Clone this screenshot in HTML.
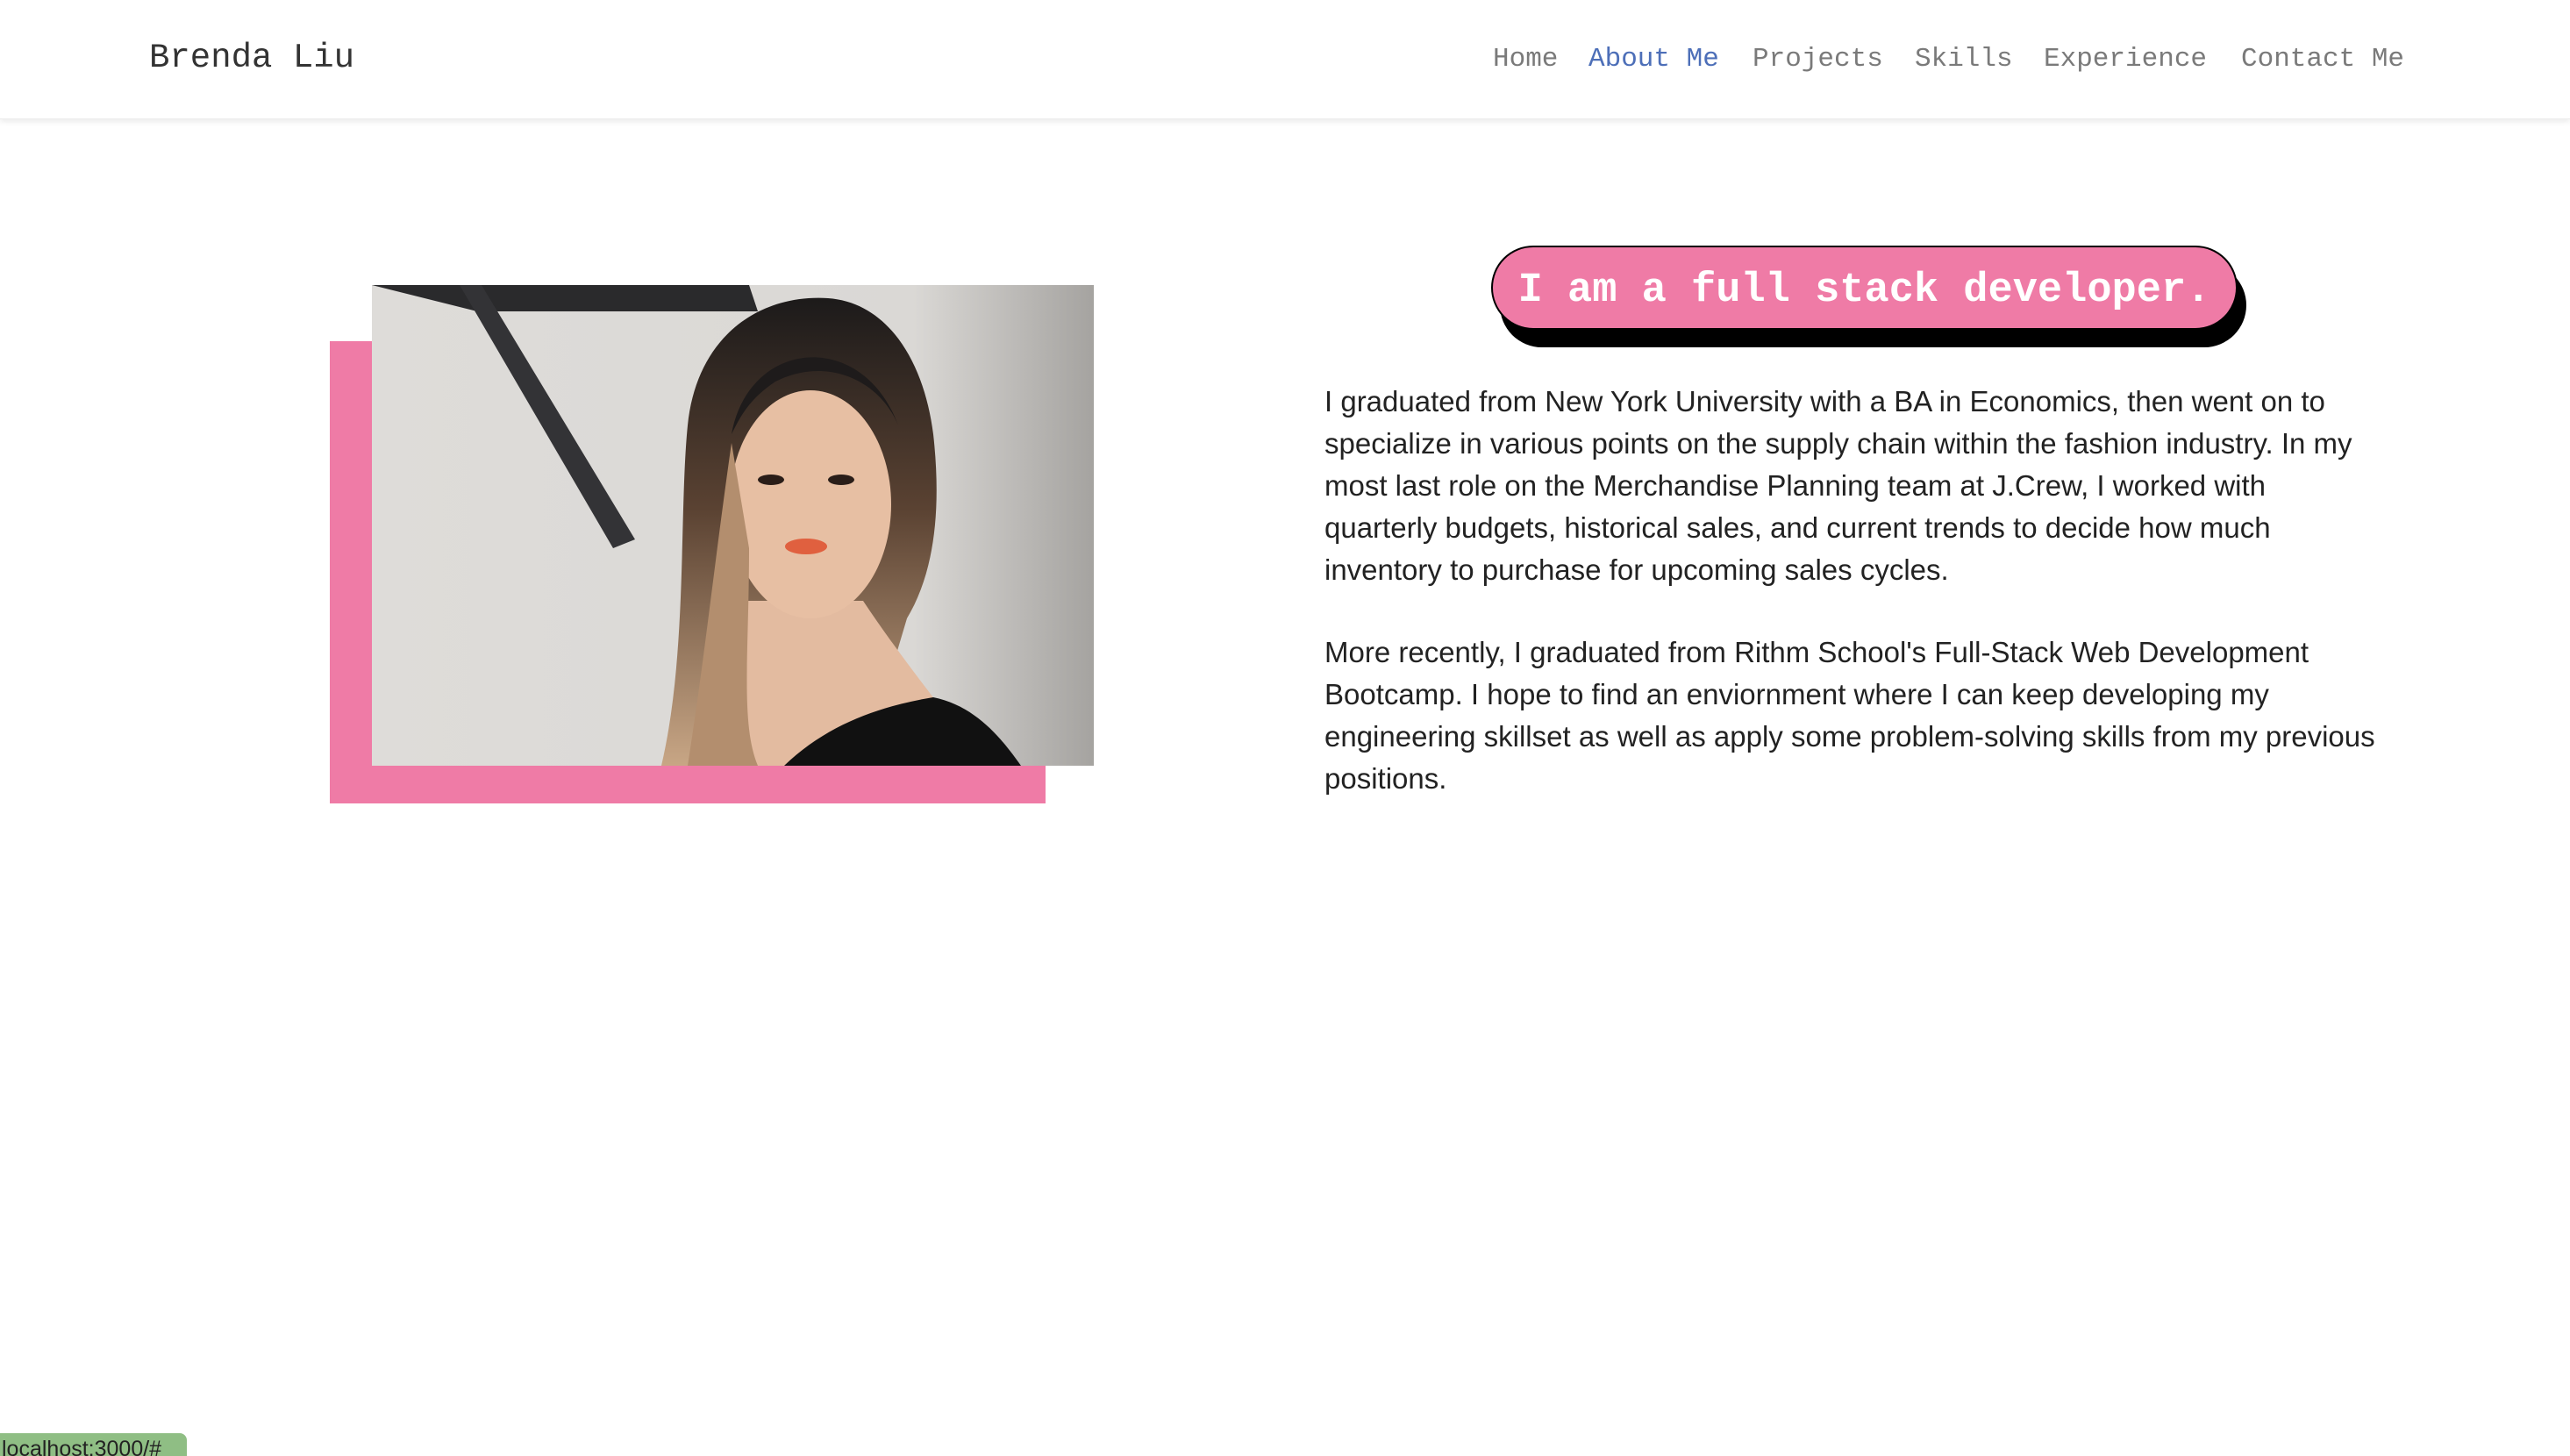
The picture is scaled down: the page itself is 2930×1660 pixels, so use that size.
<!DOCTYPE html>
<html><head><meta charset="utf-8">
<style>
html,body{margin:0;padding:0;width:2930px;height:1660px;background:#fff;overflow:hidden;position:relative}
.nav{position:absolute;left:0;top:0;width:2930px;height:135px;background:#fff;box-shadow:0 3px 6px rgba(0,0,0,0.08);border-bottom:1px solid #ececec}
.name{position:absolute;left:170px;top:42px;font:39px/48px "Liberation Mono",monospace;color:#333}
.nl{position:absolute;top:48px;font:31px/40px "Liberation Mono",monospace;color:#7a7a7a;white-space:nowrap}
.act{color:#4d6fb8}
.pink{position:absolute;left:376px;top:389px;width:816px;height:527px;background:#ef7ba6}
.photo{position:absolute;left:424px;top:325px;width:823px;height:548px;overflow:hidden}
.pill{position:absolute;left:1700px;top:280px;width:847px;height:92px;background:#ef7ba6;border:2px solid #000;border-radius:48px;box-shadow:10px 20px 0 #000;
font:bold 47px/92px "Liberation Mono",monospace;color:#fff;text-align:center;white-space:nowrap;box-sizing:content-box;padding-top:0}
.pill span{position:relative;top:4px}
.p{position:absolute;left:1510px;font:33px/48px "Liberation Sans",sans-serif;color:#222;white-space:nowrap}
.status{position:absolute;left:0;top:1634px;width:213px;height:30px;background:#8fbe84;border-top-right-radius:8px;font:25px/36px "Liberation Sans",sans-serif;color:#222;padding-left:2px;box-sizing:border-box;overflow:hidden}
</style></head><body>
<div class="nav">
<div class="name">Brenda Liu</div>
<div class="nl" style="left:1702px">Home</div>
<div class="nl act" style="left:1811px">About Me</div>
<div class="nl" style="left:1998px">Projects</div>
<div class="nl" style="left:2183px">Skills</div>
<div class="nl" style="left:2330px">Experience</div>
<div class="nl" style="left:2555px">Contact Me</div>
</div>

<div class="pink"></div>
<div class="photo">
<svg width="823" height="548" viewBox="0 0 823 548" xmlns="http://www.w3.org/2000/svg">
<defs>
<linearGradient id="hair" x1="0" y1="0" x2="0" y2="1"><stop offset="0" stop-color="#1c1a1a"/><stop offset="0.45" stop-color="#5a4232"/><stop offset="1" stop-color="#c8a685"/></linearGradient>
<linearGradient id="wall" x1="0" y1="0" x2="1" y2="0"><stop offset="0" stop-color="#dedcd9"/><stop offset="0.75" stop-color="#dad8d5"/><stop offset="1" stop-color="#a5a3a0"/></linearGradient>
</defs>
<rect width="823" height="548" fill="url(#wall)"/>
<polygon points="0,0 430,0 440,30 120,30" fill="#2a2a2c"/>
<polygon points="100,0 125,0 300,290 275,300" fill="#333336"/>
<path d="M330,548 C360,420 350,260 360,160 C370,60 440,10 520,15 C590,20 630,90 640,170 C650,260 640,330 610,380 L560,548 Z" fill="url(#hair)"/>
<path d="M395,548 C400,470 410,400 420,360 L560,360 C600,420 640,470 700,548 Z" fill="#e3bba0"/>
<path d="M470,548 C520,500 580,480 640,470 C690,480 720,520 740,548 Z" fill="#111"/>
<ellipse cx="500" cy="250" rx="92" ry="130" fill="#e7bfa3"/>
<path d="M410,170 C430,60 560,50 600,160 C580,110 520,80 460,110 C430,130 420,150 410,170 Z" fill="#1e1b1b"/>
<path d="M360,548 C380,420 390,320 410,180 L430,300 C430,420 420,500 440,548 Z" fill="#b38e6e"/>
<ellipse cx="455" cy="222" rx="15" ry="6" fill="#2a1d18"/>
<ellipse cx="535" cy="222" rx="15" ry="6" fill="#2a1d18"/>
<ellipse cx="495" cy="298" rx="24" ry="9" fill="#e0603f"/>
</svg>
</div>

<div class="pill"><span>I am a full stack developer.</span></div>

<div class="p" style="top:434px">I graduated from New York University with a BA in Economics, then went on to<br>specialize in various points on the supply chain within the fashion industry. In my<br>most last role on the Merchandise Planning team at J.Crew, I worked with<br>quarterly budgets, historical sales, and current trends to decide how much<br>inventory to purchase for upcoming sales cycles.</div>
<div class="p" style="top:720px">More recently, I graduated from Rithm School's Full-Stack Web Development<br>Bootcamp. I hope to find an enviornment where I can keep developing my<br>engineering skillset as well as apply some problem-solving skills from my previous<br>positions.</div>

<div class="status">localhost:3000/#</div>
</body></html>
